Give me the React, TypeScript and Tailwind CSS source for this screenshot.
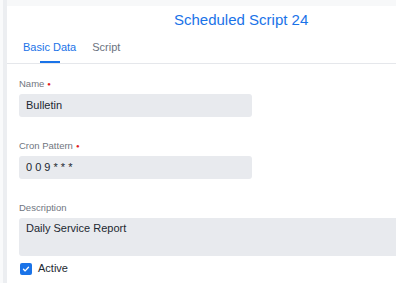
export default function App() {
  return (
    <div className="flex h-[283px] w-[396px] overflow-hidden bg-[#f8f9fa] font-['Liberation_Sans',Arial,sans-serif]">
      <div className="w-[3px] shrink-0 bg-[#f9fafb]" />
      <div className="w-[4px] shrink-0 bg-[#eceef1]" />
      <div className="flex min-w-[430px] flex-col">
        <div className="h-[6px] shrink-0 bg-[#f7f8f9]" />
        <div className="flex-1 bg-white">
          {/* title */}
          <div className="pl-[167px] pt-[5px] text-[15px] leading-[18px] text-[#1a73e8]">
            Scheduled Script 24
          </div>

          {/* tabs */}
          <div className="flex gap-[16px] border-b border-[#e5e7eb] pl-[16px] pt-[12px]">
            <div className="flex flex-col">
              <span className="text-[11px] leading-[13px] text-[#1a73e8]">Basic Data</span>
              <div className="mx-auto mt-[7px] h-[2px] w-[20px] bg-[#1a73e8]" />
            </div>
            <div className="flex flex-col">
              <span className="text-[11px] leading-[13px] text-[#6b7280]">Script</span>
            </div>
          </div>

          {/* form */}
          <div className="pl-[12px] pt-[14px]">
            <div className="mb-[23px]">
              <div className="mb-[4px] flex items-center text-[9.5px] leading-[12px] text-[#707680]">
                Name<span className="ml-[3px] text-[6px] text-[#e11d1d]">●</span>
              </div>
              <div className="flex h-[23px] w-[233px] items-center rounded-[3px] bg-[#e8eaee] pl-[7px] text-[11px] text-[#222831]">
                Bulletin
              </div>
            </div>

            <div className="mb-[23px]">
              <div className="mb-[4px] flex items-center text-[9.5px] leading-[12px] text-[#707680]">
                Cron Pattern<span className="ml-[3px] text-[6px] text-[#e11d1d]">●</span>
              </div>
              <div className="flex h-[23px] w-[233px] items-center rounded-[3px] bg-[#e8eaee] pl-[7px] text-[11px] text-[#222831]">
                0 0 9 * * *
              </div>
            </div>

            <div>
              <div className="mb-[4px] text-[9.5px] leading-[12px] text-[#707680]">Description</div>
              <div className="h-[38px] w-[420px] rounded-[3px] bg-[#e8eaee] pl-[7px] pt-[4px] text-[11px] leading-[13px] text-[#222831]">
                Daily Service Report
              </div>
            </div>

            <div className="mt-[6px] flex items-center gap-[6px] pl-[1px]">
              <div className="flex h-[12px] w-[12px] items-center justify-center rounded-[2px] bg-[#1a73e8]">
                <svg viewBox="0 0 12 12" className="h-[10px] w-[10px]" fill="none" stroke="white" strokeWidth="1.6" strokeLinecap="round" strokeLinejoin="round">
                  <path d="M3 6.3l2 2 4-4.4" />
                </svg>
              </div>
              <span className="text-[11px] leading-[13px] text-[#222831]">Active</span>
            </div>
          </div>
        </div>
      </div>
    </div>
  );
}
